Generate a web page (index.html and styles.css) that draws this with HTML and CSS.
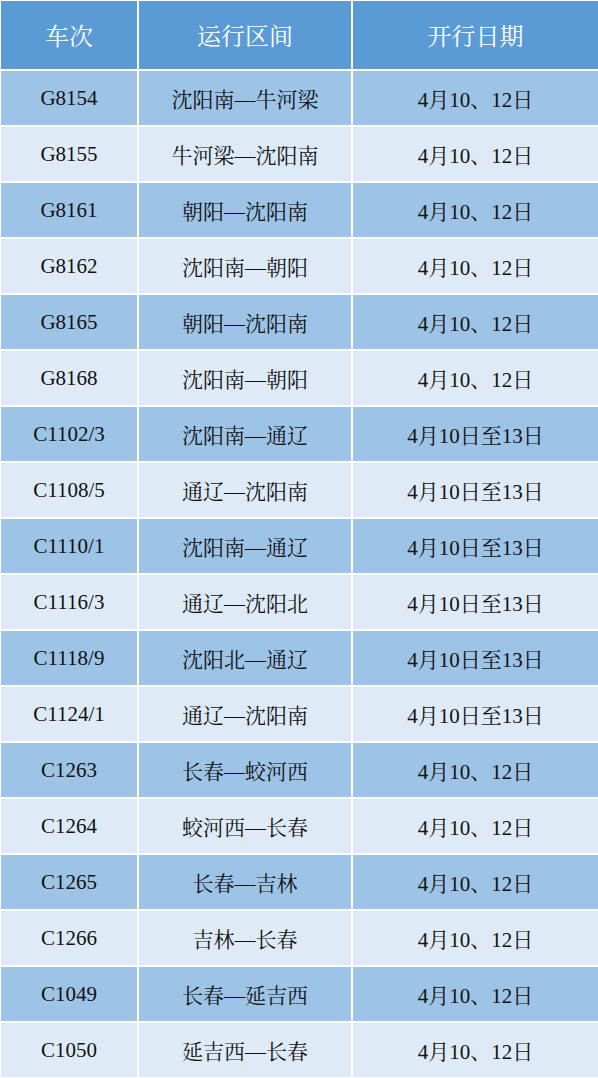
FILE: index.html
```html
<!DOCTYPE html>
<html lang="zh-CN">
<head>
<meta charset="utf-8">
<link rel="stylesheet" href="styles.css">
</head>
<body>
<div class="table">
  <div class="cell head">车次</div><div class="cell head">运行区间</div><div class="cell head">开行日期</div>
  <div class="cell odd">G8154</div><div class="cell odd">沈阳南—牛河梁</div><div class="cell odd">4月10、12日</div>
  <div class="cell even">G8155</div><div class="cell even">牛河梁—沈阳南</div><div class="cell even">4月10、12日</div>
  <div class="cell odd">G8161</div><div class="cell odd">朝阳—沈阳南</div><div class="cell odd">4月10、12日</div>
  <div class="cell even">G8162</div><div class="cell even">沈阳南—朝阳</div><div class="cell even">4月10、12日</div>
  <div class="cell odd">G8165</div><div class="cell odd">朝阳—沈阳南</div><div class="cell odd">4月10、12日</div>
  <div class="cell even">G8168</div><div class="cell even">沈阳南—朝阳</div><div class="cell even">4月10、12日</div>
  <div class="cell odd">C1102/3</div><div class="cell odd">沈阳南—通辽</div><div class="cell odd">4月10日至13日</div>
  <div class="cell even">C1108/5</div><div class="cell even">通辽—沈阳南</div><div class="cell even">4月10日至13日</div>
  <div class="cell odd">C1110/1</div><div class="cell odd">沈阳南—通辽</div><div class="cell odd">4月10日至13日</div>
  <div class="cell even">C1116/3</div><div class="cell even">通辽—沈阳北</div><div class="cell even">4月10日至13日</div>
  <div class="cell odd">C1118/9</div><div class="cell odd">沈阳北—通辽</div><div class="cell odd">4月10日至13日</div>
  <div class="cell even">C1124/1</div><div class="cell even">通辽—沈阳南</div><div class="cell even">4月10日至13日</div>
  <div class="cell odd">C1263</div><div class="cell odd">长春—蛟河西</div><div class="cell odd">4月10、12日</div>
  <div class="cell even">C1264</div><div class="cell even">蛟河西—长春</div><div class="cell even">4月10、12日</div>
  <div class="cell odd">C1265</div><div class="cell odd">长春—吉林</div><div class="cell odd">4月10、12日</div>
  <div class="cell even">C1266</div><div class="cell even">吉林—长春</div><div class="cell even">4月10、12日</div>
  <div class="cell odd">C1049</div><div class="cell odd">长春—延吉西</div><div class="cell odd">4月10、12日</div>
  <div class="cell even">C1050</div><div class="cell even">延吉西—长春</div><div class="cell even">4月10、12日</div>
</div>
</body>
</html>
```
FILE: styles.css
```css
html, body {
  margin: 0;
  padding: 0;
  background: #ffffff;
}
.table {
  width: 598px;
  height: 1078px;
  display: grid;
  grid-template-columns: 136px 212px 1fr;
  grid-template-rows: 68px repeat(18, 54px);
  gap: 2px;
  padding: 1px 0 0 1px;
  box-sizing: border-box;
  background: #ffffff;
  font-family: "Liberation Serif", "Noto Serif CJK SC", "Noto Sans CJK SC", serif;
}
.cell {
  display: flex;
  align-items: center;
  justify-content: center;
  font-size: 21px;
  color: #111111;
}
.head {
  background: #5b9bd5;
  color: #ffffff;
  font-size: 24px;
  padding-bottom: 2px;
}
.odd {
  background: #9dc3e6;
}
.even {
  background: #deebf7;
}
```
